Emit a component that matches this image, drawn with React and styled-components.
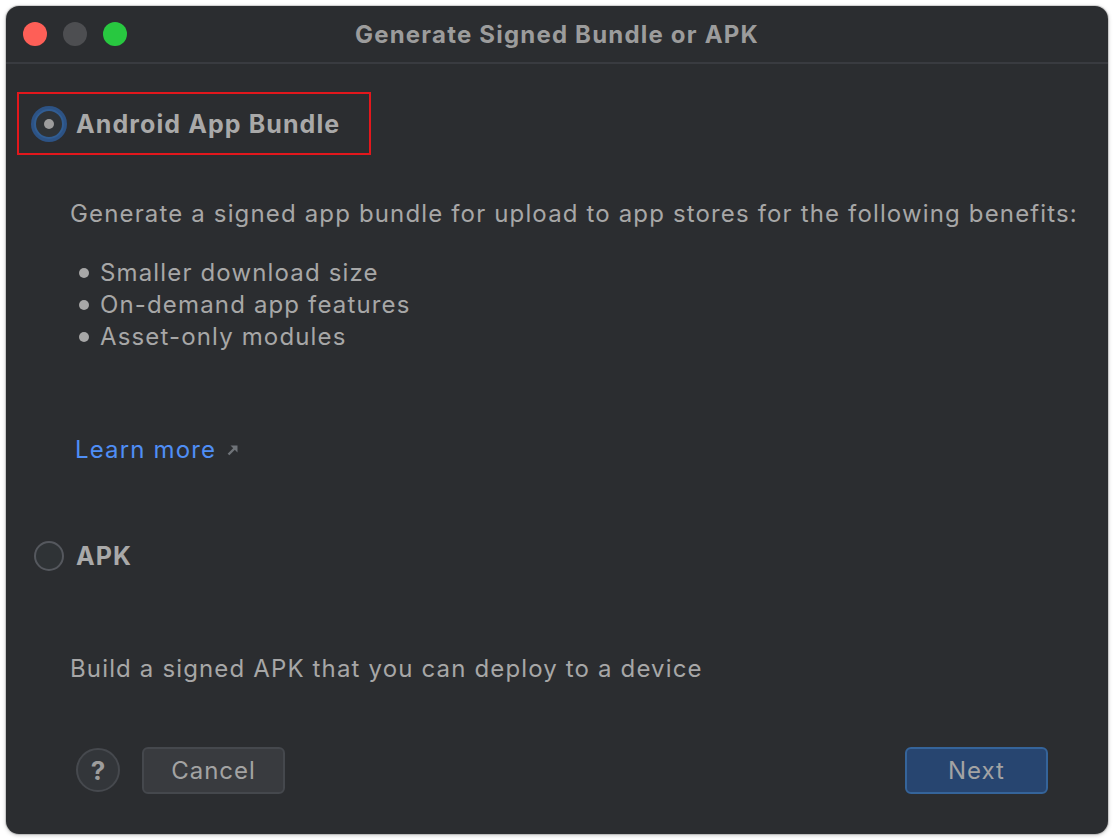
import React from "react";
import styled, { createGlobalStyle } from "styled-components";

const GlobalStyle = createGlobalStyle`
  html, body {
    margin: 0;
    padding: 0;
    background: #ffffff;
  }
  body {
    font-family: Inter, "Noto Sans", "Liberation Sans", sans-serif;
  }
`;

const benefits = ["Smaller download size", "On-demand app features", "Asset-only modules"];

const App = () => {
  return (
    <>
      <GlobalStyle />
      <Window>
        <TitleBar>
          <Lights>
            <Light color="#fe5f57" />
            <Light color="#4d4e51" />
            <Light color="#28c840" />
          </Lights>
          <Title>Generate Signed Bundle or APK</Title>
          <span />
        </TitleBar>
        <Body>
          <Highlight>
            <Radio checked />
            <OptionLabel>Android App Bundle</OptionLabel>
          </Highlight>
          <Description>
            Generate a signed app bundle for upload to app stores for the following benefits:
          </Description>
          <Bullets>
            {benefits.map((b) => (
              <Bullet key={b}>{b}</Bullet>
            ))}
          </Bullets>
          <LearnMore>
            Learn more
            <svg width="14" height="14" viewBox="0 0 14 14">
              <path d="M2.5 11.5 L9 5" stroke="#6f7378" strokeWidth="2.4" fill="none" />
              <path d="M4.5 2.5 H11.5 V9.5 Z" fill="#6f7378" />
            </svg>
          </LearnMore>
          <Option>
            <Radio />
            <OptionLabel>APK</OptionLabel>
          </Option>
          <Description $top={69}>Build a signed APK that you can deploy to a device</Description>
        </Body>
        <Footer>
          <HelpButton>?</HelpButton>
          <Button>Cancel</Button>
          <Spacer />
          <Button primary>Next</Button>
        </Footer>
      </Window>
    </>
  );
};

const Window = styled.div`
  margin: 6px;
  width: 1102px;
  height: 828px;
  box-sizing: border-box;
  background: #2b2d30;
  border-radius: 13px;
  box-shadow: 0 0 0 1px rgba(0, 0, 0, 0.12), 0 1px 4px rgba(0, 0, 0, 0.25);
  display: flex;
  flex-direction: column;
  overflow: hidden;
`;

const TitleBar = styled.div`
  height: 56px;
  flex-shrink: 0;
  display: grid;
  grid-template-columns: 1fr auto 1fr;
  align-items: center;
  border-bottom: 2px solid #393b40;
`;

const Lights = styled.div`
  display: flex;
  gap: 16px;
  padding-left: 17px;
`;

const Light = styled.div`
  width: 24px;
  height: 24px;
  border-radius: 50%;
  background: ${(p) => p.color};
`;

const Title = styled.div`
  font-size: 24px;
  font-weight: 700;
  color: #9c9c9c;
  letter-spacing: 1.2px;
`;

const Body = styled.div`
  flex: 1;
  display: flex;
  flex-direction: column;
  align-items: flex-start;
  padding: 28px 0 0 11px;
`;

const Option = styled.div`
  display: flex;
  align-items: center;
  gap: 12px;
  padding-left: 17px;
  height: 59px;
  margin-top: 61px;
`;

const Highlight = styled.div`
  display: flex;
  align-items: center;
  gap: 12px;
  width: 354px;
  height: 63px;
  box-sizing: border-box;
  border: 2px solid #e3171c;
  padding-left: 15px;
`;

const Radio = styled.div`
  width: 30px;
  height: 30px;
  box-sizing: border-box;
  border-radius: 50%;
  background: #2f3336;
  border: 2px solid ${(p) => (p.checked ? "#315d92" : "#55585e")};
  box-shadow: ${(p) => (p.checked ? "0 0 0 3px #2d5385" : "none")};
  display: flex;
  align-items: center;
  justify-content: center;
  &::after {
    content: "";
    display: ${(p) => (p.checked ? "block" : "none")};
    width: 10px;
    height: 10px;
    border-radius: 50%;
    background: #9d9d9d;
  }
`;

const OptionLabel = styled.span`
  font-size: 25px;
  font-weight: 700;
  color: #a9a9a9;
  letter-spacing: 1.1px;
`;

const Description = styled.p`
  margin: ${(p) => p.$top || 44}px 0 0 53px;
  font-size: 24px;
  color: #a7a7a7;
  line-height: 30px;
  letter-spacing: 1.15px;
`;

const Bullets = styled.ul`
  list-style: none;
  margin: 28px 0 0 62px;
  padding: 0;
`;

const Bullet = styled.li`
  display: flex;
  align-items: center;
  font-size: 24px;
  line-height: 32px;
  color: #a7a7a7;
  letter-spacing: 1.15px;
  &::before {
    content: "";
    width: 10px;
    height: 10px;
    border-radius: 50%;
    background: #a7a7a7;
    margin-right: 11px;
  }
`;

const LearnMore = styled.a`
  display: flex;
  align-items: center;
  gap: 10px;
  margin: 82px 0 0 58px;
  font-size: 24px;
  line-height: 30px;
  letter-spacing: 1.15px;
  color: #4f8ef5;
  cursor: pointer;
`;

const Footer = styled.div`
  display: flex;
  align-items: center;
  gap: 22px;
  height: 48px;
  padding: 0 60px 40px 70px;
`;

const Spacer = styled.div`
  flex: 1;
`;

const HelpButton = styled.div`
  width: 44px;
  height: 44px;
  box-sizing: border-box;
  border-radius: 50%;
  border: 2px solid #46494e;
  background: #33363a;
  color: #9d9d9d;
  font-size: 26px;
  font-weight: 700;
  display: flex;
  align-items: center;
  justify-content: center;
`;

const Button = styled.div`
  width: 143px;
  height: 47px;
  box-sizing: border-box;
  border-radius: 6px;
  border: 2px solid ${(p) => (p.primary ? "#35649a" : "#45484d")};
  background: ${(p) => (p.primary ? "#274570" : "#393b3f")};
  color: #a3a3a3;
  font-size: 24px;
  letter-spacing: 1px;
  display: flex;
  align-items: center;
  justify-content: center;
`;

export default App;
